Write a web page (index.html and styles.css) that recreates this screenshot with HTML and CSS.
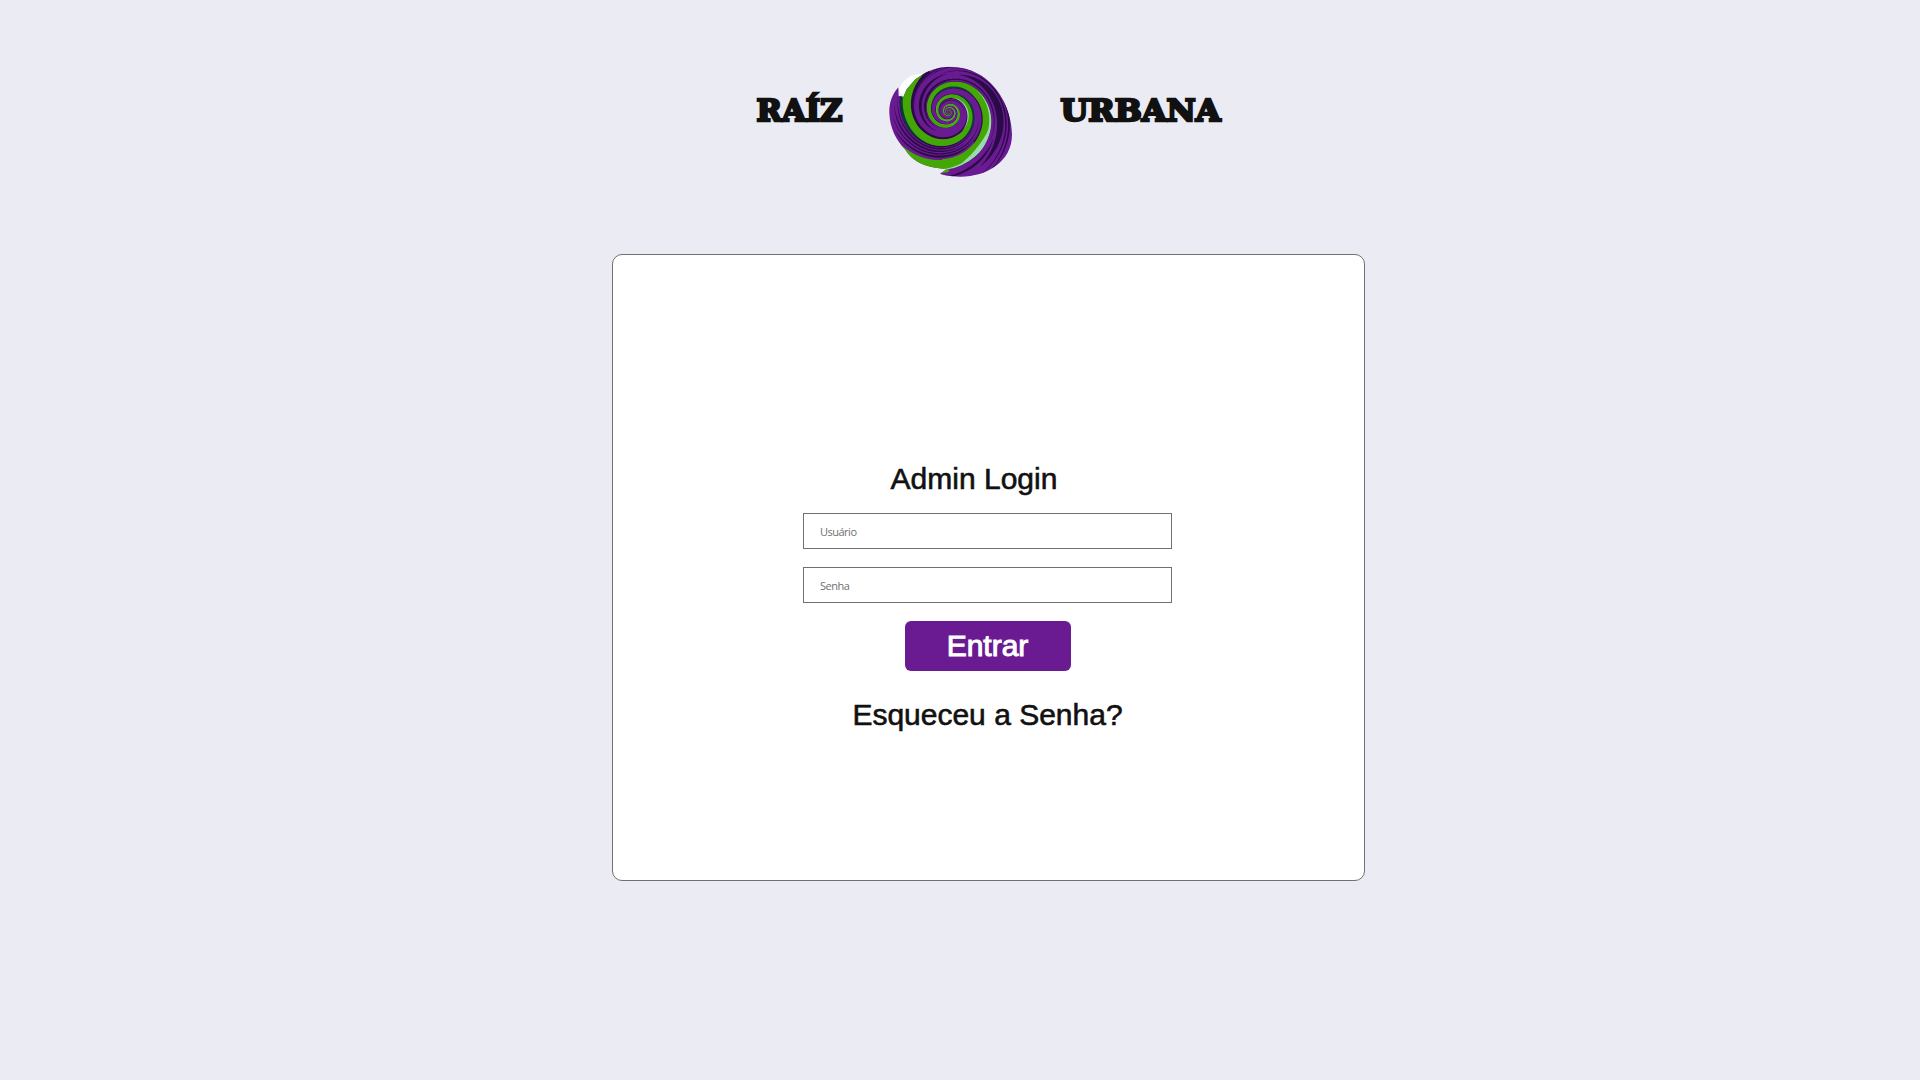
FILE: index.html
```
<!DOCTYPE html>
<html lang="pt-BR">
<head>
<meta charset="utf-8">
<title>Raíz Urbana - Admin Login</title>
<link rel="stylesheet" href="styles.css">
</head>
<body>
<main class="page">
  <header class="brand">
    <svg class="word word-left" width="90" height="40" viewBox="0 0 90 40"><text x="1.5" y="32.2" textLength="86" lengthAdjust="spacingAndGlyphs">RAÍZ</text></svg>
    <svg class="logo" width="140" height="122" viewBox="0 0 420 366" aria-hidden="true">
      <defs><clipPath id="shape"><path id="outline" d="M55 82C35 105 27 130 28 160C30 205 48 240 75 268C98 307 145 327 202 326L180 341Q193 348 240 350C318 351 397 306 396 222C395 150 353 72 295 42C240 12 180 14 130 42L106 58L80 88L70 111L56 108Z"/></clipPath></defs>
      <path fill="#fff" d="M57 85Q77 50 101 45L134 40L144 45L76 124L70 106L60 98Z"/>
      <g id="swirl" clip-path="url(#shape)"><rect width="420" height="366" fill="#6a1b91"/></g>
    </svg>
    <svg class="word" width="166" height="40" viewBox="0 0 166 40"><text x="1.5" y="32.2" textLength="160" lengthAdjust="spacingAndGlyphs">URBANA</text></svg>
  </header>
  <form class="card">
    <h1 class="title">Admin Login</h1>
    <input class="field" type="text" placeholder="Usuário">
    <input class="field" type="password" placeholder="Senha">
    <button class="submit" type="button">Entrar</button>
    <a class="forgot">Esqueceu a Senha?</a>
  </form>
</main>
<script src="swirl.js"></script>
</body>
</html>
```
FILE: styles.css
```
* { box-sizing: border-box; }
body {
  margin: 0;
  background: #ebebf4;
  color: #111;
  font-family: "Liberation Sans", Arial, sans-serif;
}
.page {
  display: flex;
  flex-direction: column;
  align-items: center;
  min-height: 1080px;
  padding: 60px 0 0 57px;
}
.brand {
  display: flex;
  align-items: flex-start;
  width: 467px;
  height: 194px;
}
.word {
  flex: none;
  margin-top: 29px;
  margin-left: 39px;
  font: bold 29px "DejaVu Serif", serif;
  fill: #111;
  stroke: #111;
  stroke-width: 2.4px;
  overflow: visible;
}
.word-left { margin-left: 0; }
.logo { flex: none; margin-left: 35px; }
.card {
  display: flex;
  flex-direction: column;
  align-items: center;
  width: 753px;
  height: 627px;
  padding: 207px 2px 0 0;
  background: #fff;
  border: 1px solid #707070;
  border-radius: 10px;
}
.title, .forgot, .submit {
  font-family: "Liberation Sans", Arial, sans-serif;
  font-size: 30px;
  font-weight: 400;
  line-height: 34px;
  -webkit-text-stroke: 0.6px currentColor;
}
.title { margin: 0 27px 17px 0; }
.field {
  width: 369px;
  height: 36px;
  margin: 0 0 18px;
  padding: 0 16px;
  border: 1px solid #707070;
  background: #fff;
  font: 400 11px "Open Sans", sans-serif;
  letter-spacing: -0.5px;
}
.field::placeholder { color: #707070; opacity: 1; }
.submit {
  width: 166px;
  height: 50px;
  margin-bottom: 27px;
  padding: 0;
  border: 0;
  border-radius: 6px;
  background: #6a1b91;
  color: #fff;
  -webkit-text-stroke-width: 1px;
}
```
FILE: swirl.js
```
// Draws the arms of the logo as bands between two logarithmic spirals.
const swirl = document.getElementById("swirl");
const GROWTH = 0.209, CX = 206, CY = 156;

// inner/outer: radii straight below the centre; from/to: angles in degrees.
function band(inner, outer, from, to, color, taper) {
  const near = [], far = [];
  for (let i = 0; i <= 160; i++) {
    const deg = from + (to - from) * i / 160;
    const a = deg * Math.PI / 180;
    const g = Math.exp(GROWTH * (a - Math.PI / 2));
    const half = (outer - inner) / 2 * (taper ? Math.sin(Math.PI * i / 160) : 1);
    const mid = (inner + outer) / 2;
    const point = r => (CX + r * g * Math.cos(a)).toFixed(1) + " " + (CY + r * g * Math.sin(a)).toFixed(1);
    near.push(point(mid - half));
    far.unshift(point(mid + half));
  }
  const path = document.createElementNS("http://www.w3.org/2000/svg", "path");
  path.setAttribute("d", "M" + near.concat(far).join("L") + "Z");
  path.setAttribute("fill", color);
  swirl.appendChild(path);
}

const DARK = "#2b0b47", TEAL = "#0b3b3d", GREEN = "#43a805", MINT = "#9cd9b0";
// shadows along the arms
band(74, 81, -1100, 245, DARK);
band(100, 104, -1100, 215, DARK);
band(134, 143, -1000, 50, DARK);
band(170, 174, -900, 75, DARK);
// streaks in the purple
band(106, 110, 20, 200, DARK, true);
band(113, 118, 60, 190, DARK, true);
band(121, 125, 10, 180, DARK, true);
band(128, 134, 40, 165, DARK, true);
band(196, 225, -75, 60, DARK, true);
band(182, 189, -150, 40, DARK, true);
band(230, 237, -110, 70, DARK, true);
band(242, 250, -90, 65, DARK, true);
band(256, 262, -130, -20, DARK, true);
band(190, 198, 30, 100, DARK, true);
band(57, 63, 120, 270, DARK, true);
band(48, 52, 150, 290, DARK, true);
band(65, 69, -180, 10, DARK, true);
band(182, 192, -240, -90, DARK, true);
band(267, 274, -175, -30, DARK, true);
// green arms
band(139, 172, -1000, 98, GREEN);
band(141, 180, 90, 145, GREEN);
band(80, 100, -1000, 250, GREEN);
band(165, 174, -40, 105, MINT, true);
band(157, 174, 24, 75, MINT, true);
band(135, 145, -150, -30, TEAL, true);
band(97, 106, -80, 80, TEAL, true);
band(76, 82, -80, 55, MINT, true);
band(97, 103, 120, 235, TEAL, true);
band(139, 144, -700, -170, MINT, true);
band(97, 101, -700, -100, MINT, true);
```
